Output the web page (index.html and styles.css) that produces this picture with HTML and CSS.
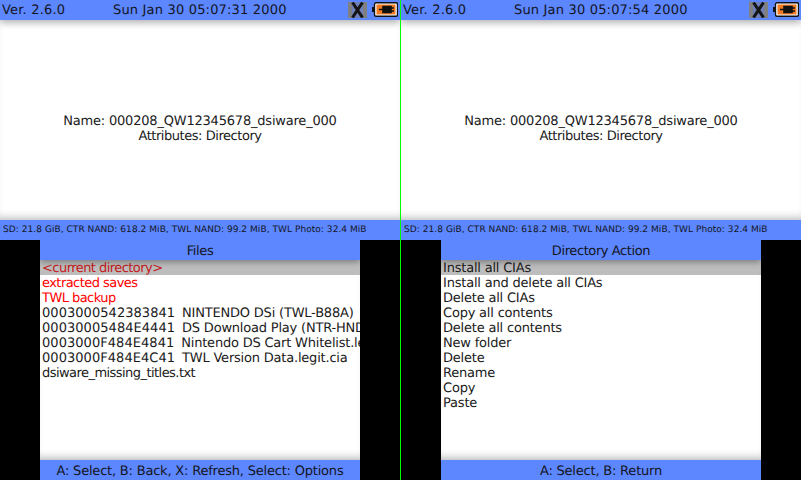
FILE: index.html
```html
<!DOCTYPE html>
<html lang="en">
<head>
<meta charset="utf-8">
<title>FBI</title>
<link rel="stylesheet" href="styles.css">
</head>
<body>
<main class="app">
  <section class="pane">
    <header class="bar top">
      <span class="ver">Ver. 2.6.0</span>
      <span class="clock">Sun Jan 30 05:07:31 2000</span>
      <span class="icons">
        <svg class="wifi" width="19" height="16" viewBox="0 0 19 16"><rect x="0" y="0" width="4" height="16" fill="#808080"/><rect x="15" y="0" width="4" height="16" fill="#808080"/><rect x="4" y="0" width="11" height="16" fill="#6f7fb8"/><path d="M4.5 0.5L14.5 15.5M14.5 0.5L4.5 15.5" stroke="#141414" stroke-width="3" fill="none"/></svg>
        <svg class="batt" width="26" height="15" viewBox="0 0 26 15"><path d="M0 5h2v5h-2z" fill="#111"/><rect x="2.5" y="0.7" width="23" height="13.6" rx="1.5" fill="#fff" stroke="#111" stroke-width="1.4"/><rect x="4.5" y="2.5" width="19" height="10" fill="#f07a22"/><path d="M7 7.5h4M11 4.5h8v6h-8zM19 6h3M19 9h3" stroke="#111" stroke-width="1.6" fill="#111"/></svg>
      </span>
    </header>
    <div class="info"><p>Name: 000208_QW12345678_dsiware_000</p><p class="attr">Attributes: Directory</p></div>
    <div class="bar status">SD: 21.8 GiB, CTR NAND: 618.2 MiB, TWL NAND: 99.2 MiB, TWL Photo: 32.4 MiB</div>
    <div class="screen">
      <div class="bar title">Files</div>
      <ul class="list">
        <li class="row sel red tight">&lt;current directory&gt;</li>
        <li class="row red tight">extracted saves</li>
        <li class="row red tight">TWL backup</li>
        <li class="row"><span class="id">0003000542383841</span> NINTENDO DSi (TWL-B88A)</li>
        <li class="row"><span class="id">00030005484E4441</span> DS Download Play (NTR-HND-A)</li>
        <li class="row"><span class="id">0003000F484E4841</span> Nintendo DS Cart Whitelist.legit.cia</li>
        <li class="row"><span class="id">0003000F484E4C41</span> TWL Version Data.legit.cia</li>
        <li class="row tight">dsiware_missing_titles.txt</li>
      </ul>
      <div class="bar foot">A: Select, B: Back, X: Refresh, Select: Options</div>
    </div>
  </section>
  <div class="divider"></div>
  <section class="pane">
    <header class="bar top">
      <span class="ver">Ver. 2.6.0</span>
      <span class="clock">Sun Jan 30 05:07:54 2000</span>
      <span class="icons">
        <svg class="wifi" width="19" height="16" viewBox="0 0 19 16"><rect x="0" y="0" width="4" height="16" fill="#808080"/><rect x="15" y="0" width="4" height="16" fill="#808080"/><rect x="4" y="0" width="11" height="16" fill="#6f7fb8"/><path d="M4.5 0.5L14.5 15.5M14.5 0.5L4.5 15.5" stroke="#141414" stroke-width="3" fill="none"/></svg>
        <svg class="batt" width="26" height="15" viewBox="0 0 26 15"><path d="M0 5h2v5h-2z" fill="#111"/><rect x="2.5" y="0.7" width="23" height="13.6" rx="1.5" fill="#fff" stroke="#111" stroke-width="1.4"/><rect x="4.5" y="2.5" width="19" height="10" fill="#f07a22"/><path d="M7 7.5h4M11 4.5h8v6h-8zM19 6h3M19 9h3" stroke="#111" stroke-width="1.6" fill="#111"/></svg>
      </span>
    </header>
    <div class="info"><p>Name: 000208_QW12345678_dsiware_000</p><p class="attr">Attributes: Directory</p></div>
    <div class="bar status">SD: 21.8 GiB, CTR NAND: 618.2 MiB, TWL NAND: 99.2 MiB, TWL Photo: 32.4 MiB</div>
    <div class="screen">
      <div class="bar title">Directory Action</div>
      <ul class="list">
        <li class="row sel">Install all CIAs</li>
        <li class="row">Install and delete all CIAs</li>
        <li class="row">Delete all CIAs</li>
        <li class="row">Copy all contents</li>
        <li class="row">Delete all contents</li>
        <li class="row">New folder</li>
        <li class="row">Delete</li>
        <li class="row">Rename</li>
        <li class="row">Copy</li>
        <li class="row">Paste</li>
      </ul>
      <div class="bar foot">A: Select, B: Return</div>
    </div>
  </section>
</main>
</body>
</html>
```
FILE: styles.css
```css
* { box-sizing: border-box; }
html, body { margin: 0; padding: 0; }
body { width: 801px; height: 480px; overflow: hidden; background: #000; font-family: "DejaVu Sans", sans-serif; font-size: 13px; letter-spacing: -0.2px; color: #1a1a1a; text-rendering: geometricPrecision; }
.app { display: flex; width: 801px; height: 480px; }
.pane { width: 400px; height: 480px; display: flex; flex-direction: column; overflow: hidden; }
.divider { width: 1px; background: #00ff00; position: relative; z-index: 5; }
.bar { background: #5c87ff; color: #141423; }
.top { height: 20px; flex: none; display: flex; align-items: center; position: relative; z-index: 2; letter-spacing: .18px; box-shadow: 0 3px 7px rgba(0,0,0,.3); padding-left: 2px; }
.ver { width: 111px; }
.clock { width: 235px; }
.icons { display: flex; align-items: center; gap: 5px; }
.wifi, .batt { display: block; }
.batt { margin-bottom: 1px; }
.info { height: 200px; flex: none; background: #fff; display: flex; flex-direction: column; align-items: center; justify-content: center; padding-top: 17px; line-height: 15px; box-shadow: inset 0 -8px 8px -6px rgba(0,0,0,.28); }
.info p { margin: 0; }
.info .attr { letter-spacing: -.45px; }
.status { height: 20px; flex: none; display: flex; align-items: center; padding-left: 3px; font-size: 9px; letter-spacing: .05px; white-space: nowrap; }
.screen { width: 320px; margin: 0 40px; height: 240px; flex: none; display: flex; flex-direction: column; background: #fff; overflow: hidden; }
.title { height: 20px; flex: none; display: flex; align-items: center; justify-content: center; position: relative; z-index: 2; box-shadow: 0 2px 6px rgba(0,0,0,.35); letter-spacing: -.4px; padding-top: 3px; }
.list { list-style: none; margin: 0; padding: 0; height: 200px; flex: none; overflow: hidden; box-shadow: inset 0 -8px 8px -6px rgba(0,0,0,.3); }
.row { height: 15px; line-height: 18px; padding-left: 2px; white-space: nowrap; overflow: hidden; }
.tight { letter-spacing: -.55px; }
.id { letter-spacing: .05px; margin-right: 3px; }
.sel { background: #bdbdbd; }
.red { color: #ff0000; }
.sel.red { color: #c41a1a; }
.foot { height: 20px; flex: none; display: flex; align-items: center; justify-content: center; padding-top: 3px; }
```
